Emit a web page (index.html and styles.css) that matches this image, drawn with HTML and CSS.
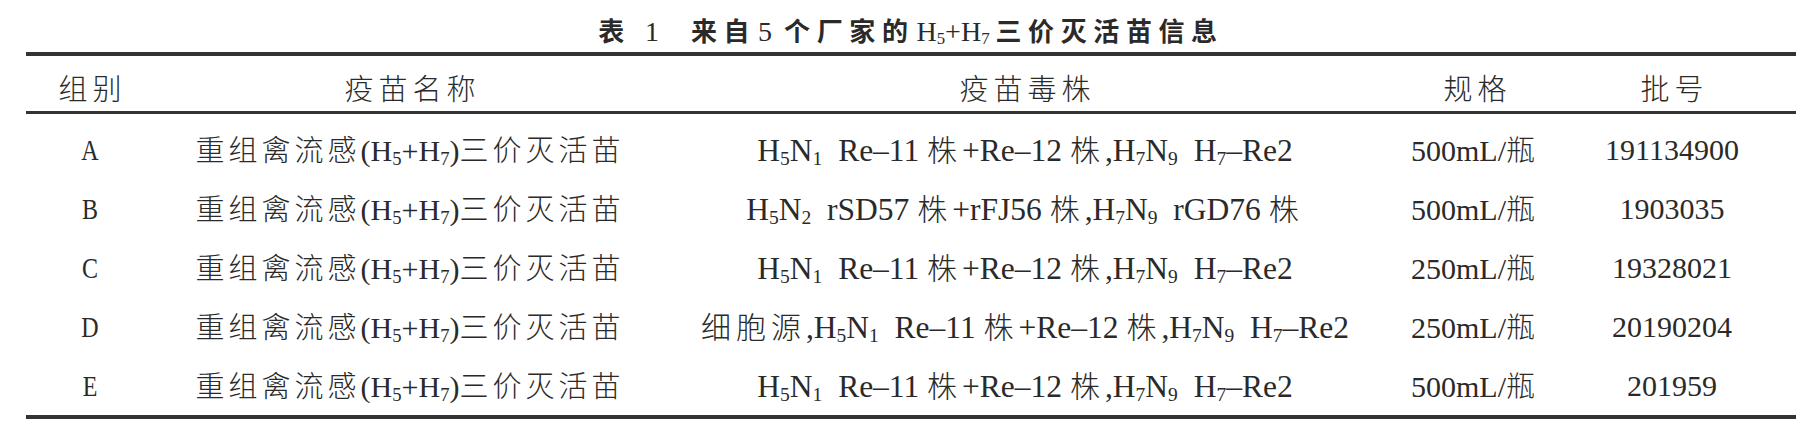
FILE: index.html
```html
<!DOCTYPE html>
<html lang="zh-CN">
<head>
<meta charset="utf-8">
<title>表1 来自5个厂家的H5+H7三价灭活苗信息</title>
<link rel="stylesheet" href="styles.css">
</head>
<body>
<div class="page">
  <h1 class="title"><span class="tcj">表</span><span class="tnum t1">1</span><span class="tcj tgap">来自</span><span class="tnum t5">5</span><span class="tcj">个厂家的</span><span class="tlat">H<sub>5</sub>+H<sub>7</sub></span><span class="tcj">三价灭活苗信息</span></h1>
  <table class="tbl">
    <colgroup>
      <col class="c1"><col class="c2"><col class="c3"><col class="c4"><col class="c5">
    </colgroup>
    <thead>
      <tr><th>组别</th><th>疫苗名称</th><th>疫苗毒株</th><th>规格</th><th class="last">批号</th></tr>
    </thead>
    <tbody>
      <tr>
        <td><span class="grp">A</span></td>
        <td><span class="cj">重组禽流感</span>(H<sub>5</sub>+H<sub>7</sub>)<span class="cj">三价灭活苗</span></td>
        <td class="strain">H<sub>5</sub>N<sub>1</sub>&nbsp;&nbsp;Re–11 <span class="cj">株</span>+Re–12 <span class="cj">株</span>,H<sub>7</sub>N<sub>9</sub>&nbsp;&nbsp;H<sub>7</sub>–Re2</td>
        <td>500mL/<span class="cj">瓶</span></td>
        <td class="last">191134900</td>
      </tr>
      <tr>
        <td><span class="grp">B</span></td>
        <td><span class="cj">重组禽流感</span>(H<sub>5</sub>+H<sub>7</sub>)<span class="cj">三价灭活苗</span></td>
        <td class="strain">H<sub>5</sub>N<sub>2</sub>&nbsp;&nbsp;rSD57 <span class="cj">株</span>+rFJ56 <span class="cj">株</span>,H<sub>7</sub>N<sub>9</sub>&nbsp;&nbsp;rGD76 <span class="cj">株</span></td>
        <td>500mL/<span class="cj">瓶</span></td>
        <td class="last">1903035</td>
      </tr>
      <tr>
        <td><span class="grp">C</span></td>
        <td><span class="cj">重组禽流感</span>(H<sub>5</sub>+H<sub>7</sub>)<span class="cj">三价灭活苗</span></td>
        <td class="strain">H<sub>5</sub>N<sub>1</sub>&nbsp;&nbsp;Re–11 <span class="cj">株</span>+Re–12 <span class="cj">株</span>,H<sub>7</sub>N<sub>9</sub>&nbsp;&nbsp;H<sub>7</sub>–Re2</td>
        <td>250mL/<span class="cj">瓶</span></td>
        <td class="last">19328021</td>
      </tr>
      <tr>
        <td><span class="grp">D</span></td>
        <td><span class="cj">重组禽流感</span>(H<sub>5</sub>+H<sub>7</sub>)<span class="cj">三价灭活苗</span></td>
        <td class="strain"><span class="cj">细胞源</span>,H<sub>5</sub>N<sub>1</sub>&nbsp;&nbsp;Re–11 <span class="cj">株</span>+Re–12 <span class="cj">株</span>,H<sub>7</sub>N<sub>9</sub>&nbsp;&nbsp;H<sub>7</sub>–Re2</td>
        <td>250mL/<span class="cj">瓶</span></td>
        <td class="last">20190204</td>
      </tr>
      <tr>
        <td><span class="grp">E</span></td>
        <td><span class="cj">重组禽流感</span>(H<sub>5</sub>+H<sub>7</sub>)<span class="cj">三价灭活苗</span></td>
        <td class="strain">H<sub>5</sub>N<sub>1</sub>&nbsp;&nbsp;Re–11 <span class="cj">株</span>+Re–12 <span class="cj">株</span>,H<sub>7</sub>N<sub>9</sub>&nbsp;&nbsp;H<sub>7</sub>–Re2</td>
        <td>500mL/<span class="cj">瓶</span></td>
        <td class="last">201959</td>
      </tr>
    </tbody>
  </table>
</div>
</body>
</html>
```

FILE: styles.css
```css
html, body {
  margin: 0;
  padding: 0;
  background: #ffffff;
}

.page {
  width: 1816px;
  height: 427px;
  box-sizing: border-box;
  padding: 11px 20px 0 26px;
  color: #2a2a2a;
  font-family: "Liberation Serif", "Noto Sans CJK SC", serif;
}

.title {
  margin: 0 0 3px 0;
  height: 38px;
  line-height: 38px;
  text-align: center;
  font-size: 26px;
  font-weight: normal;
  white-space: nowrap;
}

.tcj {
  font-family: "Noto Sans CJK SC", sans-serif;
  font-weight: 700;
  letter-spacing: 6.6px;
}

.tnum, .tlat {
  font-family: "Liberation Serif", serif;
  font-weight: 400;
  font-size: 28px;
}

.t1 { margin: 0 32px 0 14px; }
.t5 { margin: 0 12px 0 2px; }
.tlat { margin: 0 6px 0 2px; }

.title sub {
  font-size: 0.6em;
  line-height: 0;
  vertical-align: -0.2em;
}

.tbl {
  width: 1770px;
  border-collapse: collapse;
  table-layout: fixed;
  border-top: 4px solid #333333;
  border-bottom: 4px solid #333333;
  font-size: 30px;
  font-weight: 200;
}

.c1 { width: 128px; }
.c2 { width: 512px; }
.c3 { width: 718px; }
.c4 { width: 182px; }
.c5 { width: 230px; }

.tbl th {
  font-weight: 200;
  font-family: "Noto Sans CJK SC", "Liberation Serif", sans-serif;
  font-size: 29px;
  letter-spacing: 5px;
  height: 48px;
  line-height: 48px;
  padding: 7px 0 0 5px;
  border-bottom: 3px solid #333333;
  text-align: center;
  vertical-align: middle;
}

.tbl td {
  height: 57px;
  line-height: 57px;
  padding: 0;
  text-align: center;
  vertical-align: middle;
  white-space: nowrap;
}

.tbl tbody tr:first-child td {
  padding-top: 6px;
}

.tbl td.last {
  padding-right: 18px;
}

.tbl th.last {
  padding-right: 18px;
}

.tbl sub {
  font-size: 0.62em;
  line-height: 0;
  vertical-align: -0.22em;
}

.cj {
  font-family: "Noto Sans CJK SC", sans-serif;
  font-size: 29px;
  letter-spacing: 4px;
}

.tbl td.strain {
  font-size: 31.5px;
}

.strain .cj {
  font-size: 30px;
  letter-spacing: 5px;
}

.grp {
  display: inline-block;
  transform: scaleX(0.8);
}
```
